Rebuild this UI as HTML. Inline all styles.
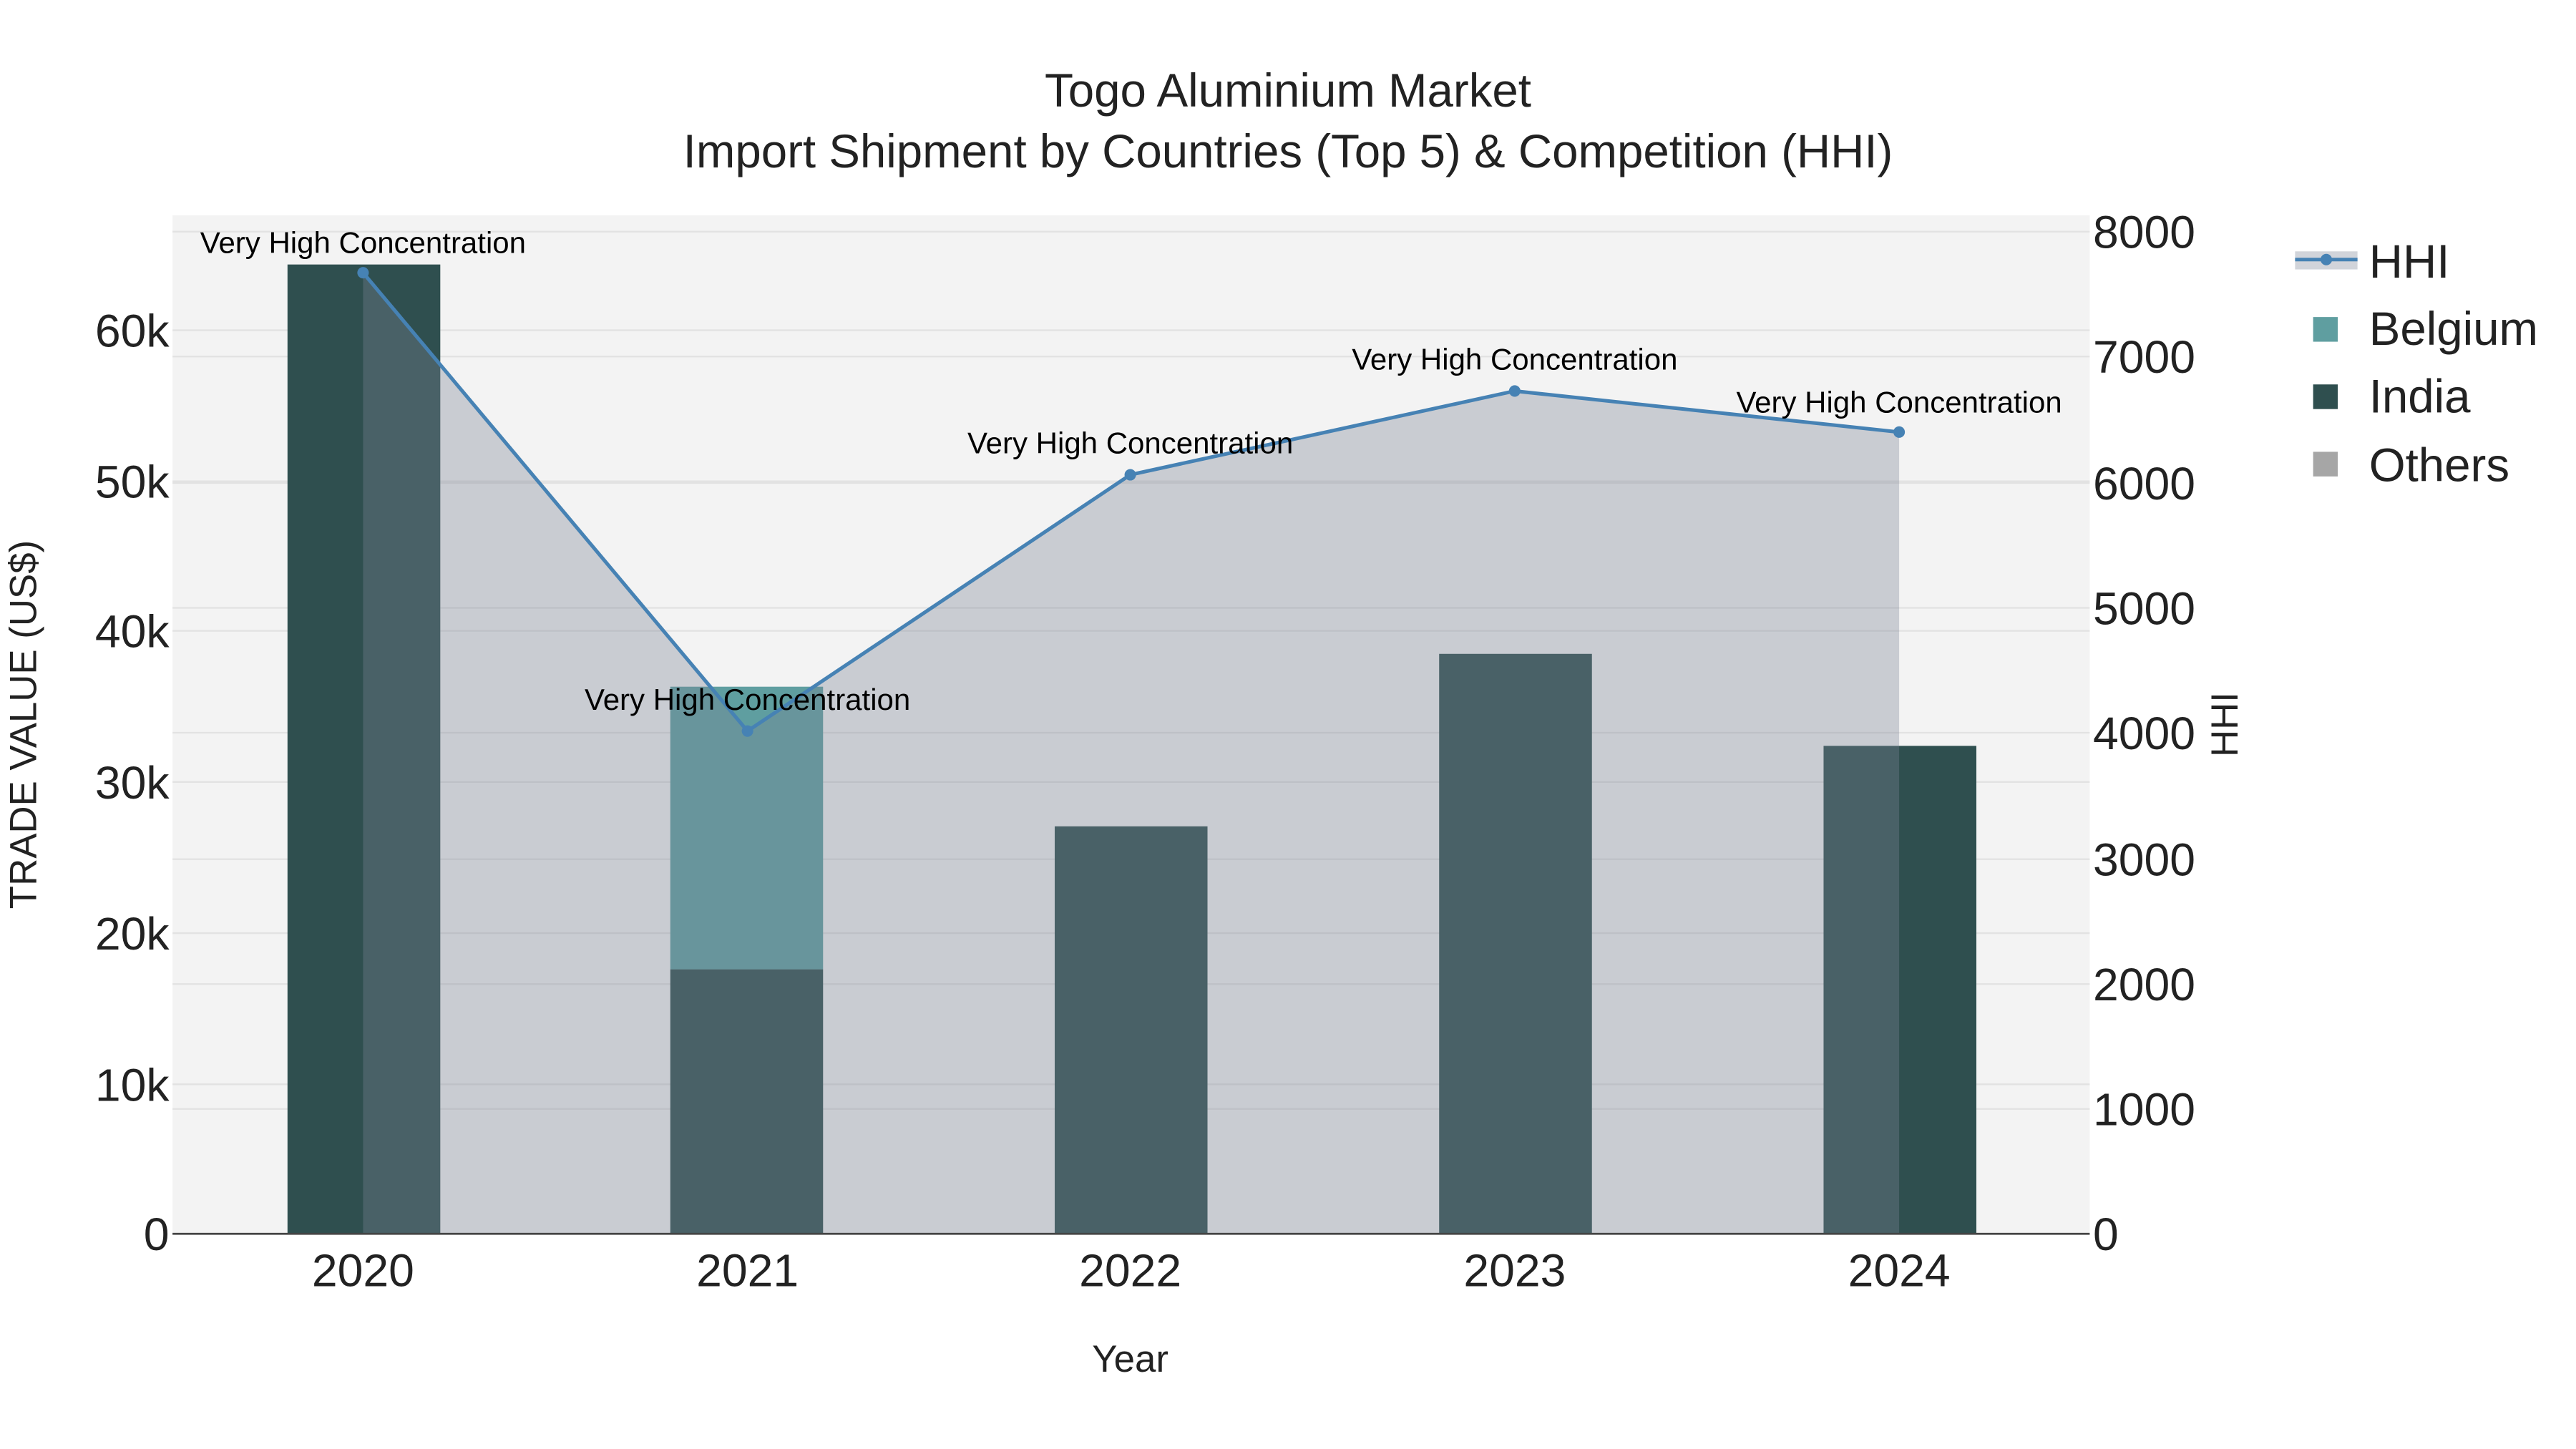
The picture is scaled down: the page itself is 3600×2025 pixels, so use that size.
<!DOCTYPE html>
<html><head><meta charset="utf-8"><style>html,body{margin:0;padding:0;background:#fff}svg{display:block}</style></head>
<body>
<svg width="3600" height="2025" viewBox="0 0 1568 882" preserveAspectRatio="none" xmlns="http://www.w3.org/2000/svg" font-family="Liberation Sans, Arial, sans-serif">
<rect width="1568" height="882" fill="#fff"/>
<rect x="105" y="131" width="1167" height="620" fill="#f3f3f3"/>
<g stroke="#e2e2e2" stroke-width="1">
<line x1="105" x2="1272" y1="201" y2="201"/><line x1="105" x2="1272" y1="293" y2="293"/><line x1="105" x2="1272" y1="384" y2="384"/><line x1="105" x2="1272" y1="476" y2="476"/><line x1="105" x2="1272" y1="568" y2="568"/><line x1="105" x2="1272" y1="660" y2="660"/>
<line x1="105" x2="1272" y1="141" y2="141"/><line x1="105" x2="1272" y1="217" y2="217"/><line x1="105" x2="1272" y1="294" y2="294"/><line x1="105" x2="1272" y1="370" y2="370"/><line x1="105" x2="1272" y1="446" y2="446"/><line x1="105" x2="1272" y1="523" y2="523"/><line x1="105" x2="1272" y1="599" y2="599"/><line x1="105" x2="1272" y1="675" y2="675"/>
</g>
<g fill="#2f4f4f">
<rect x="175" y="161" width="93" height="590"/>
<rect x="408" y="590" width="93" height="161"/>
<rect x="642" y="503" width="93" height="248"/>
<rect x="876" y="398" width="93" height="353"/>
<rect x="1110" y="454" width="93" height="297"/>
</g>
<rect x="408" y="418" width="93" height="172" fill="#5f9ea0"/>
<polygon points="221,166 455,445 688,289 922,238 1156,263 1156,751 221,751" fill="rgb(123,133,148)" fill-opacity="0.35"/>
<polyline points="221,166 455,445 688,289 922,238 1156,263" fill="none" stroke="#4682b4" stroke-width="2.2"/>
<g fill="#4682b4"><circle cx="221" cy="166" r="3.5"/><circle cx="455" cy="445" r="3.5"/><circle cx="688" cy="289" r="3.5"/><circle cx="922" cy="238" r="3.5"/><circle cx="1156" cy="263" r="3.5"/></g>
<line x1="105" x2="1272" y1="751" y2="751" stroke="#444" stroke-width="1.2"/>
<g font-size="18.3" fill="#000" text-anchor="middle">
<text x="221" y="154">Very High Concentration</text>
<text x="455" y="432">Very High Concentration</text>
<text x="688" y="276">Very High Concentration</text>
<text x="922" y="225">Very High Concentration</text>
<text x="1156" y="251">Very High Concentration</text>
</g>
<g font-size="28.5" fill="#222" text-anchor="middle">
<text x="784" y="65">Togo Aluminium Market</text>
<text x="784" y="102">Import Shipment by Countries (Top 5) &amp; Competition (HHI)</text>
</g>
<g font-size="28" fill="#222" text-anchor="end">
<text x="103" y="761">0</text><text x="103" y="670">10k</text><text x="103" y="578">20k</text><text x="103" y="486">30k</text><text x="103" y="394">40k</text><text x="103" y="303">50k</text><text x="103" y="211">60k</text>
</g>
<g font-size="28" fill="#222" text-anchor="start">
<text x="1274" y="761">0</text><text x="1274" y="685">1000</text><text x="1274" y="609">2000</text><text x="1274" y="533">3000</text><text x="1274" y="456">4000</text><text x="1274" y="380">5000</text><text x="1274" y="304">6000</text><text x="1274" y="227">7000</text><text x="1274" y="151">8000</text>
</g>
<g font-size="28" fill="#222" text-anchor="middle">
<text x="221" y="783">2020</text><text x="455" y="783">2021</text><text x="688" y="783">2022</text><text x="922" y="783">2023</text><text x="1156" y="783">2024</text>
</g>
<text x="688" y="835" font-size="23" fill="#222" text-anchor="middle">Year</text>
<text transform="translate(22,441) rotate(-90)" font-size="23" fill="#222" text-anchor="middle">TRADE VALUE (US$)</text>
<text transform="translate(1362,441) rotate(-90)" font-size="23" fill="#222" text-anchor="middle">HHI</text>
<rect x="1397" y="153" width="38" height="11" fill="rgb(123,133,148)" fill-opacity="0.35"/>
<line x1="1397" x2="1435" y1="158" y2="158" stroke="#4682b4" stroke-width="2.2"/>
<circle cx="1416" cy="158" r="3.5" fill="#4682b4"/>
<rect x="1408" y="193" width="15" height="15" fill="#5f9ea0"/>
<rect x="1408" y="234" width="15" height="15" fill="#2f4f4f"/>
<rect x="1408" y="275" width="15" height="15" fill="#a6a6a6"/>
<g font-size="28.5" fill="#222">
<text x="1442" y="169">HHI</text><text x="1442" y="210">Belgium</text><text x="1442" y="251">India</text><text x="1442" y="293">Others</text>
</g>
</svg>
</body></html>
